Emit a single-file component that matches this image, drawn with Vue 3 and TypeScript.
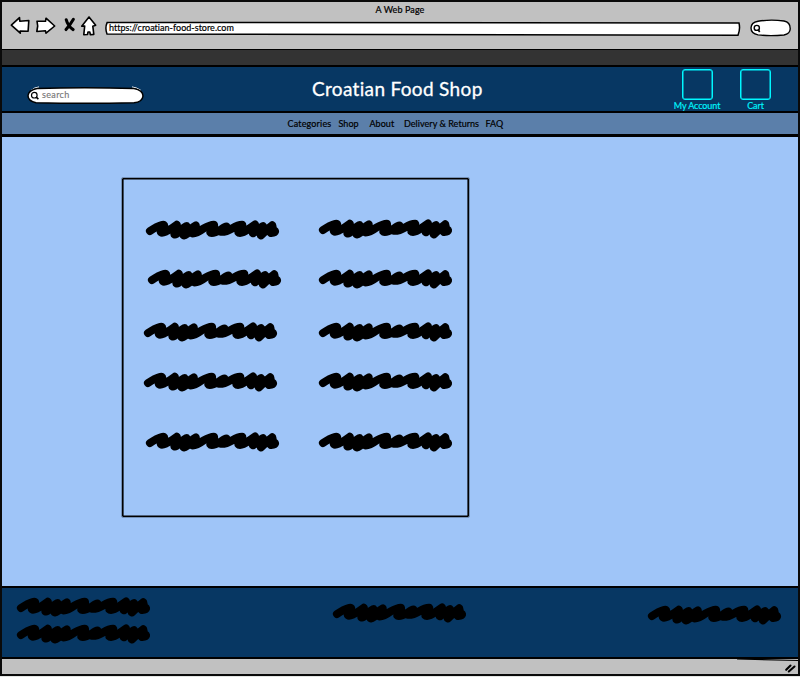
<script setup lang="ts">
interface Row { left: number; right: number; height: number }

const scribble =
  'M4 11Q11 6.2 15.5 5.1Q19 4 17.7 6.5Q15 10 14.8 12Q15.5 13.4 20 11.5Q27 8 30.8 4.8Q31 7 28.5 14.4Q30 15 33 12Q38 7.5 40.5 6.2Q41 9 37.8 15.4Q41 15 44 10.5Q47 6.5 49.7 5.4Q50.5 8 46.6 13.4Q51 13.3 57.5 8.5Q64 5 68 4.8Q69 6.5 64.5 12.6Q67 14 75 9.5Q80 6 80.5 6.5Q80.5 9 74.8 11.8Q80 12.1 86.5 8.2Q92 5 96.2 4.8Q97.5 6 92.6 12.6Q96 13.8 102.5 9L109 4.6Q110.5 7 107 13.2L112 9.5L117 6.2Q118.5 8.5 115 15.3L120 10.5L126.2 5.4Q127.5 9 125 13Q130 12.5 128.8 10.8L118 11'

const rows: Row[] = [
  { left: 22, right: 39.3, height: 48.5 },
  { left: 24.2, right: 37.1, height: 53 },
  { left: 20.2, right: 41.1, height: 50 },
  { left: 20.2, right: 41.1, height: 60 },
  { left: 21.5, right: 39.8, height: 20 },
]

const links: string[] = ['Categories', 'Shop', 'About', 'Delivery & Returns', 'FAQ']
</script>

<template>
  <div class="window">
    <header class="chrome">
      <div class="page-title"><span>A Web Page</span></div>
      <div class="toolbar">
        <svg class="tools" width="100" height="24" viewBox="0 0 100 24">
          <g fill="#fff" stroke="#000" stroke-width="1.6" stroke-linejoin="round">
            <path d="M11.3 11.2L19.5 3.6L19.8 7.2L28.8 6.5L28.1 17.2L20.1 17L20.3 19.2Z" />
            <path d="M37 7.2L45.5 7.3L46 4.2L54.7 12L46 19.2L45.5 16.8L36.8 17.5L37.7 12Z" />
            <path d="M89 3L95.7 11.2L92.8 12.2L93.8 20.4L90.3 20.7L89.8 18L88 18L87.5 20.5L83.8 20.7L84.7 12L81.7 12.2Z" />
          </g>
          <path d="M66.2 5.7Q68 12.5 73.2 15.6M73.4 5.2Q70 11 66 15.6" fill="none" stroke="#000" stroke-width="3" stroke-linecap="round" />
        </svg>
        <div class="address">
          <svg class="outline" width="636" height="16" viewBox="0 0 636 16">
            <path d="M2.2 1.4L634 2Q635.5 8 633 14.2L2 12.9Q-.3 7 2.2 1.4Z" fill="#fff" stroke="#000" stroke-width="1.5" />
          </svg>
          <span class="url">https://croatian-food-store.com</span>
        </div>
        <svg class="mini-search" width="42" height="18" viewBox="0 0 42 18">
          <path d="M8 2.2Q21 .2 34 2Q40.5 3.3 40.2 10Q40 14.8 34 16Q20 17.3 8 15.9Q1 14.5 1 9Q1 3.5 8 2.2Z" fill="#fff" stroke="#000" stroke-width="1.4" />
          <ellipse cx="6.8" cy="8.9" rx="2.6" ry="2.5" fill="none" stroke="#000" stroke-width="1.4" />
          <path d="M8 10.5L9.7 13" stroke="#000" stroke-width="1.7" />
        </svg>
      </div>
    </header>
    <div class="strip"></div>
    <div class="banner">
      <div class="search">
        <svg class="outline" width="117" height="19" viewBox="0 0 117 19">
          <path d="M4 4.5Q7 1.5 12 .9M105 .9Q110 1.5 114 4.5" fill="none" stroke="#fff" stroke-width="1" />
          <path d="M10 2.4Q57 1.2 107 2.4Q116 4 116 10Q115.5 16 107 16.8Q57 17.8 9 16.8Q1 15 1 9.8Q1.5 4 10 2.4Z" fill="#fff" stroke="#000" stroke-width="1.5" />
          <circle cx="7.3" cy="9.2" r="2.8" fill="none" stroke="#000" stroke-width="1.2" />
          <path d="M9.2 11.2L11.4 13.2" stroke="#000" stroke-width="1.6" />
        </svg>
        <span class="hint">search</span>
      </div>
      <h1>Croatian Food Shop</h1>
      <div class="action account"><i></i><span>My Account</span></div>
      <div class="action cart"><i></i><span>Cart</span></div>
    </div>
    <nav>
      <a v-for="(link, i) in links" :key="link" :class="'link' + i">{{ link }}</a>
    </nav>
    <main>
      <section class="card">
        <div v-for="(row, i) in rows" :key="i" class="row" :style="{ height: row.height + 'px', paddingLeft: row.left + 'px', gap: row.right + 'px' }">
          <svg v-for="n in 2" :key="n" class="scribble" :class="{ raised: i === 0 && n === 2 }" viewBox="0 0 134 20"><path :d="scribble" /></svg>
        </div>
      </section>
    </main>
    <footer>
      <div class="stack">
        <svg class="scribble" viewBox="0 0 134 20"><path :d="scribble" /></svg>
        <svg class="scribble" viewBox="0 0 134 20"><path :d="scribble" /></svg>
      </div>
      <svg class="scribble middle" viewBox="0 0 134 20"><path :d="scribble" /></svg>
      <svg class="scribble last" viewBox="0 0 134 20"><path :d="scribble" /></svg>
    </footer>
    <div class="status">
      <svg width="797" height="17" viewBox="0 0 797 17">
        <path d="M735 0Q765 .8 797 1.5" fill="none" stroke="#000" stroke-width="1.2" />
        <path d="M784.2 10.8L788.5 6.6M786.8 12.5L792.5 7.5" fill="none" stroke="#000" stroke-width="2.1" stroke-linecap="round" />
      </svg>
    </div>
  </div>
</template>

<style>
body { margin: 0; background: #e4e6e4; }
</style>

<style scoped>
* { box-sizing: border-box; }
svg { display: block; flex: none; }
.window {
  width: 800px;
  height: 676px;
  display: flex;
  flex-direction: column;
  border: 2px solid #0a0a0a;
  background: #111;
  font-family: Lato, "Liberation Sans", sans-serif;
  font-size: 9px;
  color: #000;
  white-space: nowrap;
}
.chrome { height: 47px; background: #c1c1c1; }
.page-title { height: 15px; display: flex; justify-content: center; line-height: 15px; }
.page-title span { letter-spacing: .1px; -webkit-text-stroke: .2px #000; }
.toolbar { display: flex; height: 28px; margin-left: -2px; margin-top: -3px; }
.address { margin: 7px 0 0 5px; position: relative; width: 636px; height: 16px; }
.outline { position: absolute; left: 0; top: 0; overflow: visible; }
.url { position: relative; display: block; padding-left: 4px; line-height: 14px; letter-spacing: .03px; -webkit-text-stroke: .2px #000; }
.mini-search { margin: 5px 0 0 9px; }
.strip { height: 17px; border-top: 1.5px solid #000; border-bottom: 1px solid #000; background: #333; }
.banner { height: 46px; display: flex; border-top: 1px solid #000; border-bottom: 1px solid #000; background: #073763; }
.search { position: relative; width: 117px; height: 19px; margin: 19px 0 0 25px; }
.hint { position: relative; display: block; padding-left: 15px; line-height: 17px; color: #777; letter-spacing: .35px; -webkit-text-stroke: .15px #777; }
h1 { width: 172px; margin: 8px 0 0 168px; font-size: 19px; line-height: 27px; font-weight: 400; color: #fff; letter-spacing: .33px; -webkit-text-stroke: .3px #fff; }
.action { width: 50px; height: 44px; display: flex; flex-direction: column; align-items: center; color: #00f7ff; line-height: 11px; margin-top: 2px; }
.action i { width: 31px; height: 31px; border: 1px solid #00f7ff; border-radius: 3px; flex: none; box-shadow: inset 0 0 0 .5px #00f7ff; }
.action span { letter-spacing: -.08px; -webkit-text-stroke: .15px #00f7ff; }
.account { margin-left: 188px; }
.cart { margin-left: 8.5px; }
nav { height: 24px; display: flex; padding: 0 0 0 285.5px; background: #5b7faa; border-top: 1px solid #000; border-bottom: 2px solid #000; line-height: 21px; letter-spacing: .04px; -webkit-text-stroke: .2px #000; }
.link0 { width: 51px; letter-spacing: .17px; }
.link1 { width: 31px; }
.link2 { width: 34.5px; }
.link3 { width: 81.5px; }
main { height: 450px; padding: 41px 0 0 120px; background: #9fc5f8; border-top: 1px solid #000; }
.card { width: 347px; height: 339px; border: 1px solid #000; box-shadow: inset 0 0 0 .6px #000; outline: .4px solid #0004; border-radius: 1px; padding: 41px 0 0 1px; }
.row { display: flex; }
.scribble { width: 134px; height: 20px; overflow: visible; }
.scribble path { fill: none; stroke: #000; stroke-width: 8.1px; stroke-linecap: round; stroke-linejoin: round; }
.raised { margin-top: -1px; }
footer { height: 72px; display: flex; background: #073763; border-top: 2px solid #000; border-bottom: 1px solid #000; }
.stack { display: flex; flex-direction: column; gap: 7.2px; padding: 9px 0 0 14.5px; }
.middle { margin: 15px 0 0 182px; }
.last { margin: 17px 0 0 181px; }
.status { height: 16px; border-top: 1px solid #000; background: #c1c1c1; overflow: hidden; }
</style>
